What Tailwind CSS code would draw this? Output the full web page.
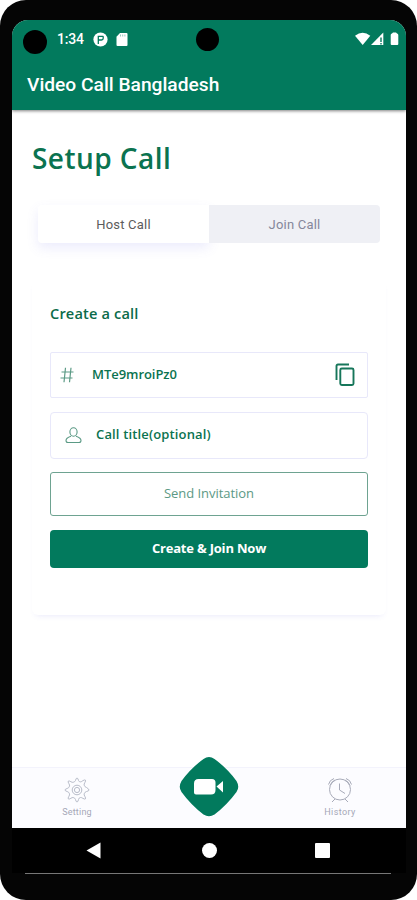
<!DOCTYPE html>
<html lang="en">
<head>
    <meta charset="UTF-8">
    <meta name="viewport" content="width=device-width, initial-scale=1.0">
    <title>Video Call Bangladesh</title>
    <script src="https://cdn.jsdelivr.net/npm/@tailwindcss/browser@4"></script>
</head>
<body class="bg-white font-['Open_Sans',sans-serif]">
    <!-- Phone frame -->
    <div class="relative w-[417px] h-[900px] bg-[#050505] rounded-[26px] pt-5 pl-[12px] pr-[11px] overflow-hidden">
        <div class="w-[394px] h-[853px] flex flex-col bg-white rounded-t-[16px] overflow-hidden">

            <!-- Status bar and app bar -->
            <header class="relative z-10 h-[90px] shrink-0 bg-[#027a5d] text-white shadow-[0_1px_3px_rgba(0,0,0,0.5)] font-[Roboto,sans-serif]">
                <div class="h-[38px] flex items-center pl-[11px] pr-[7px]">
                    <span class="w-6 h-6 mt-[6px] rounded-full bg-black"></span>
                    <span class="ml-[10px] w-[27px] text-[14px] leading-5 font-medium whitespace-nowrap tracking-[-0.2px]">1:34</span>
                    <svg class="ml-[9px] w-[15px] h-[15px]" viewBox="0 0 15 15">
                        <circle cx="7.5" cy="7.5" r="7.1" fill="#fff"/>
                        <path d="M5.300 12V4.300h5M5.300 8h3.200q1.700 0 1.700-1.800V4.300" fill="none" stroke="#027a5d" stroke-width="1.3"/>
                    </svg>
                    <svg class="ml-[8px] w-[12px] h-[13px]" viewBox="0 0 12 13">
                        <path d="M4 0h6.5Q11.500 0 11.500 1v11q0 1-1 1H1.500q-1 0-1-1V3.700z" fill="#fff"/>
                        <path d="M4.500 1.500v2M6.700 1.500v2M8.900 1.500v2" stroke="#7fbcae" stroke-width=".8"/>
                    </svg>
                    <span class="ml-[68px] mt-[1px] w-[23px] h-[23px] rounded-full bg-black"></span>
                    <svg class="ml-auto w-[45px] h-[14px]" viewBox="0 0 45 14">
                        <path d="M1 3.800Q8.700-2.200 16.300 3.800L8.700 13z" fill="#fff"/>
                        <path d="M29.300 .500v12.500H17z" fill="#fff"/>
                        <path d="M27 5.500v4.500M27 11v1.500" stroke="#027a5d" stroke-width="1.400"/>
                        <path d="M38 1.500l1-1h3l1 1q1.300.2 1.300 1.500V12q0 1-1 1h-5.600q-1 0-1-1V3q0-1.300 1.300-1.500z" fill="#fff"/>
                    </svg>
                </div>
                <h1 class="pl-[15px] pt-[14px] text-[19.2px] leading-[26px] font-medium whitespace-nowrap">Video Call Bangladesh</h1>
            </header>

            <!-- Main content -->
            <main class="h-[657px] shrink-0 pt-[29px]">
                <h2 class="pl-[20px] text-[28px] leading-[38px] font-semibold tracking-[0.45px] text-[#0b7350]">Setup Call</h2>

                <!-- Tabs -->
                <div class="ml-[26px] mt-[28px] w-[342px] h-[38px] flex text-[13px] font-[Roboto,sans-serif] tracking-[0.2px]">
                    <div class="w-[171px] pt-[1px] flex items-center justify-center bg-white text-[#5c5c5c] rounded-l-[4px] shadow-[0_5px_12px_rgba(105,105,235,0.13)]">Host Call</div>
                    <div class="relative w-[171px] pt-[1px] flex items-center justify-center bg-[#eff0f5] text-[#85879b] rounded-r-[4px]">Join Call</div>
                </div>

                <!-- Create a call card -->
                <section class="ml-[20px] mt-[37px] w-[354px] h-[335px] px-[18px] pt-[23px] rounded-[6px] shadow-[0_4px_6px_-4px_rgba(90,90,220,0.16)]">
                    <h3 class="text-[14.6px] leading-5 font-semibold tracking-[0.15px] text-[#0b6b4a]">Create a call</h3>

                    <div class="mt-[29px] h-[46px] flex items-center border border-[#e8e8fa] rounded-[2px] pl-[9px] pr-[12px] text-[#0b7350]">
                        <svg class="w-[14px] h-[16px]" viewBox="0 0 14 16" fill="none" stroke="#5b9a85" stroke-width="1.200">
                            <path d="M5.500.800 4 15.200M11 .800 9.500 15.200M1.500 5h12M.500 11h12"/>
                        </svg>
                        <span class="ml-[18px] text-[13px] font-semibold tracking-[-0.05px]">MTe9mroiPz0</span>
                        <svg class="ml-auto w-[20px] h-[24px]" viewBox="0 0 20 24" fill="none" stroke="#16765a" stroke-width="1.900">
                            <path d="M14 1.500H3Q1.500 1.500 1.500 3v14"/>
                            <rect x="5.300" y="5.500" width="13.200" height="16.500" rx="1.500"/>
                        </svg>
                    </div>

                    <div class="mt-[14px] h-[47px] flex items-center border border-[#e8e8fa] rounded-[4px] pl-[14px] text-[#0b7350]">
                        <svg class="w-[17px] h-[17px]" viewBox="0 0 17 17" fill="none" stroke="#5b9a85" stroke-width="1.100">
                            <ellipse cx="8.500" cy="5" rx="3.600" ry="4.200"/>
                            <path d="M6 9.200Q1 10.800 1 13.500q0 2 2 2h11q2 0 2-2 0-2.700-5-4.300"/>
                        </svg>
                        <span class="ml-[14px] mb-[2px] text-[13px] font-semibold tracking-[0.15px]">Call title(optional)</span>
                    </div>

                    <button class="block w-full mt-[13px] h-[44px] border border-[#6ea391] rounded-[3px] text-[13px] tracking-[-0.05px] text-[#5c9985]">Send Invitation</button>
                    <button class="block w-full mt-[14px] h-[38px] rounded-[4px] bg-[#027a5d] text-white text-[13px] font-bold tracking-[-0.2px]">Create &amp; Join Now</button>
                </section>
            </main>

            <!-- Bottom tab bar -->
            <nav class="relative h-[61px] shrink-0 bg-[#fcfcff] border-t border-[#f3f3fc] pl-[35px] pr-[36px] flex justify-between text-[9px] leading-3 text-[#a5a7b7] font-[Roboto,sans-serif]">
                <div class="w-[60px] pt-[9px] flex flex-col items-center">
                    <svg class="w-[26px] h-[26px]" viewBox="0 0 26 26" fill="none" stroke="#b8bcc9" stroke-width="1" stroke-linejoin="round">
                        <path d="M11.500 3.500Q12 1 13 1t1.500 2.500q.5 1.500 2.300 1.400.9-.3 2-1.200 2-1.200 2.600-.6t-.6 2.600q-1 1.500-.6 2.500.6 1.800 2.300 2.300Q25 12 25 13t-2.500 1.500q-1.700.5-2.300 2.300-.4 1 .6 2.500 1.200 2 .6 2.600t-2.600-.6q-1.500-1-2.300-.8-1.700.3-2 2Q14 25 13 25t-1.500-2.500q-.5-1.600-2.300-2-1-.2-2.300.8-2 1.200-2.600.6t.6-2.600q1-1.500.6-2.500-.6-1.800-2.300-2.300Q1 14 1 13t2.200-1.500q1.700-.5 2.300-2.300.4-1-.6-2.500-1.200-2-.6-2.600t2.600.6q1.300.9 2.300.6 1.800-.5 2.300-1.800z"/>
                        <circle cx="13" cy="13" r="4.800"/>
                        <circle cx="13" cy="13" r="2.600"/>
                    </svg>
                    <span class="mt-[3px] tracking-[0.2px]">Setting</span>
                </div>
                <div class="w-[60px] pt-[9px] flex flex-col items-center">
                    <svg class="w-[26px] h-[26px]" viewBox="0 0 26 26" fill="none" stroke="#a8abb9" stroke-width="1">
                        <circle cx="13" cy="12.500" r="10.500"/>
                        <path d="M12.500 6.500v6.500l5.500 3.500M8 22l-3 3M18 22l3 3M1.500 7.500Q2.500 3 7 1.500M3 8.500Q4.500 4.500 8 3M24.500 7.500Q23.500 3 19 1.500M23 8.500Q21.500 4.500 18 3"/>
                    </svg>
                    <span class="mt-[3px] tracking-[0.4px]">History</span>
                </div>
                <!-- Floating call button -->
                <svg class="absolute left-[167px] top-[-12px] w-[60px] h-[62px]" viewBox="0 0 60 62">
                    <path d="M24.500 3Q30-1 35.500 3Q48 12 57.500 25Q61 31 57.500 36Q48 49 35.500 58.500Q30 62 24.500 58.500Q12 49 2.500 36Q-1 31 2.500 25Q12 12 24.500 3z" fill="#027a5d"/>
                    <path d="M19.500 23H33q3.500 0 3.500 3.500V34q0 4.500-4.500 4.500H17q-2 0-2-2v-9q0-4.500 4.500-4.500zM37.500 30.500l6.500-5.500v11.500z" fill="#fff"/>
                </svg>
            </nav>

            <!-- System navigation -->
            <div class="h-[45px] shrink-0 bg-black flex items-center justify-between pl-[74px] pr-[76px]">
                <svg class="w-[15px] h-[17px]" viewBox="0 0 15 17"><path d="M14.500.500v16L.500 8.500z" fill="#fff"/></svg>
                <span class="ml-[2px] w-[15px] h-[15px] rounded-full bg-white"></span>
                <span class="w-[15px] h-[15px] rounded-[1px] bg-white"></span>
            </div>
        </div>
        <!-- Lower screen edge -->
        <div class="ml-[13px] w-[366px] h-px bg-[#777]"></div>
    </div>
</body>
</html>
